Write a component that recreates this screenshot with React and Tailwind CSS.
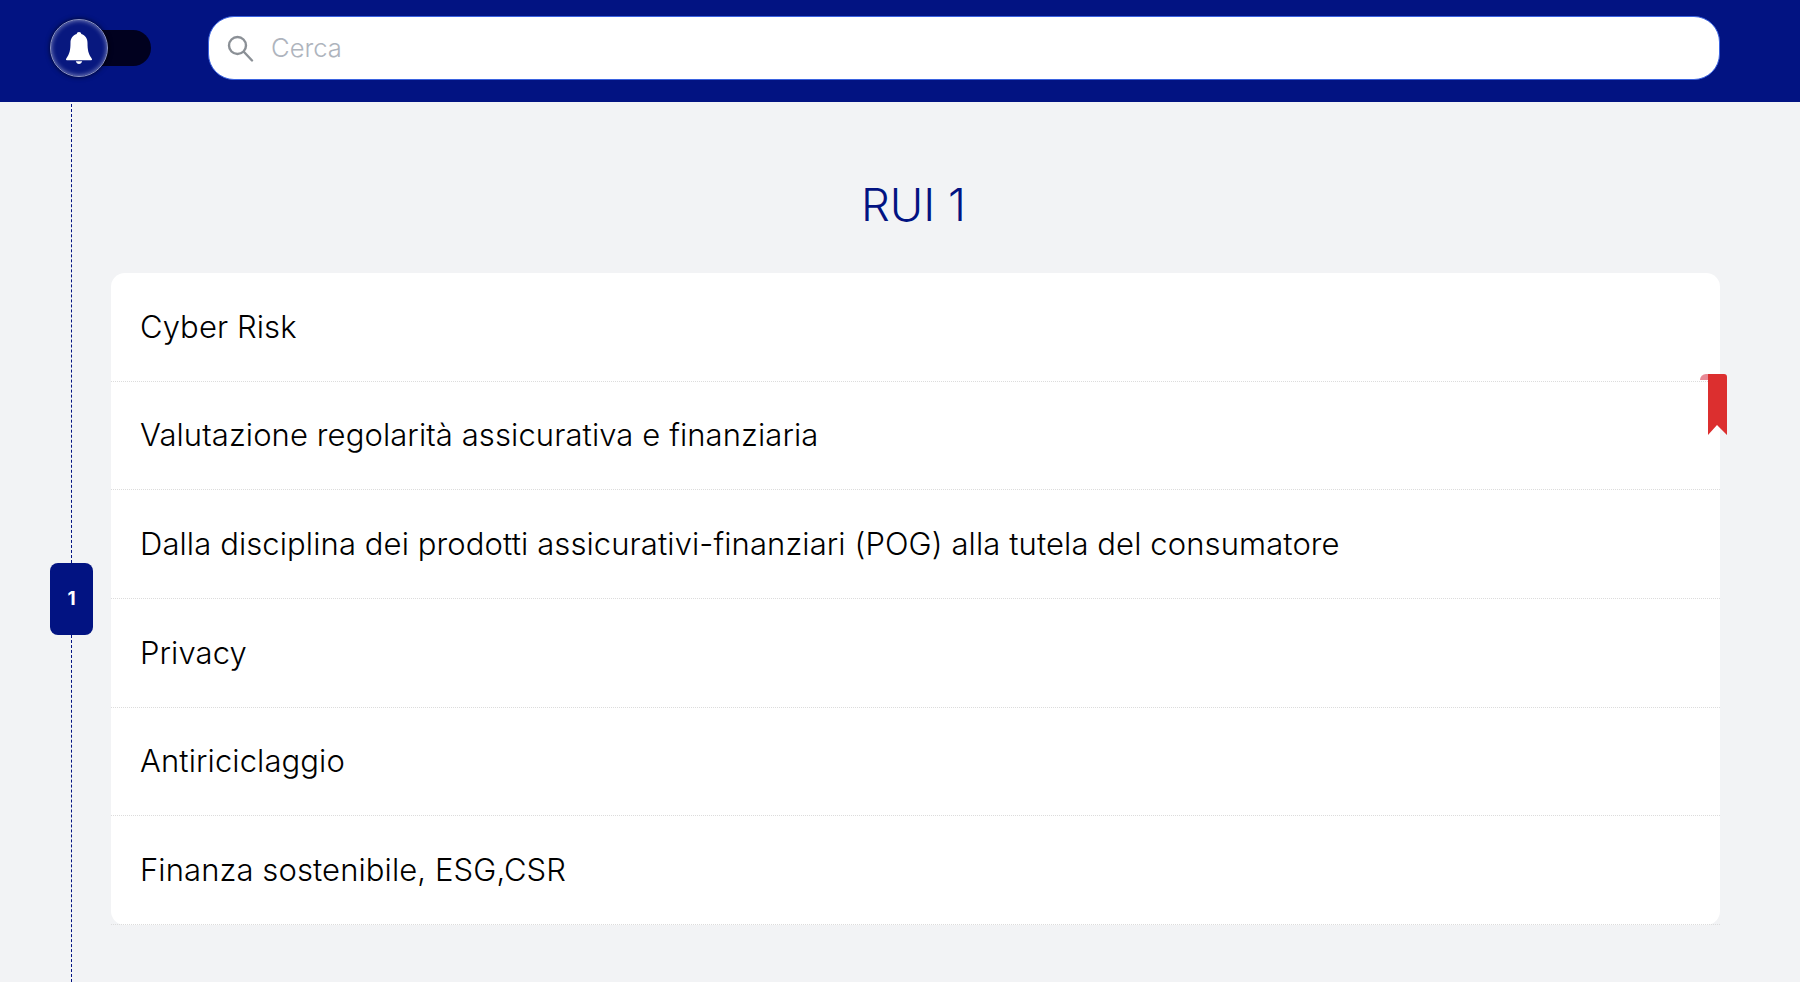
import React from 'react';

const items = [
  'Cyber Risk',
  'Valutazione regolarità assicurativa e finanziaria',
  'Dalla disciplina dei prodotti assicurativi-finanziari (POG) alla tutela del consumatore',
  'Privacy',
  'Antiriciclaggio',
  'Finanza sostenibile, ESG,CSR',
];

function Bell() {
  return (
    <svg viewBox="0 0 26 32" className="w-[26px] h-[32px]" fill="#fff">
      <path d="M13 0c-1.300 0-2.200.9-2.300 2.100C6.700 3.300 4.500 6.600 4.500 11c0 7-1 11-3.900 15-.5.7-.7 1.300-.6 1.800.1.300.4.400.8.400h24.400c.4 0 .7-.1.800-.4.1-.5-.1-1.100-.6-1.800-2.900-4-3.900-8-3.900-15 0-4.400-2.200-7.700-6.200-8.900C15.200.9 14.300 0 13 0z" />
      <path d="M9.800 29.300h6.400c-.4 1.600-1.700 2.700-3.200 2.700s-2.800-1.100-3.200-2.700z" />
    </svg>
  );
}

function SearchIcon() {
  return (
    <svg viewBox="0 0 28 28" className="w-[28px] h-[28px]" fill="none" stroke="#8b9096" strokeWidth="2.400">
      <circle cx="11.500" cy="11.500" r="8.500" />
      <path d="M17.800 17.800L26 26.500" strokeLinecap="round" />
    </svg>
  );
}

export default function App() {
  return (
    <div className="h-[982px] overflow-hidden bg-[#f2f3f5] flex flex-col font-['Inter',sans-serif]">
      <header className="h-[102px] shrink-0 bg-[#021382] flex items-start pt-[16px] pl-[50px] pr-[80px]">
        <div className="relative mt-[3px] w-[102px] h-[58px] shrink-0">
          <div className="absolute left-[40px] top-[11px] w-[61px] h-[36px] rounded-r-full bg-[#01011f]"></div>
          <div className="relative w-[58px] h-[58px] rounded-full bg-[#08187f] border border-[#8f97c4] shadow-[0_0_5px_rgba(0,0,0,0.7),inset_0_0_5px_rgba(255,255,255,0.55)] flex items-center justify-center">
            <Bell />
          </div>
        </div>
        <div className="ml-[56px] flex-1 h-[64px] rounded-[26px] bg-white border border-[#3b63e0] flex items-center pl-[17px]">
          <SearchIcon />
          <span className="ml-[17px] text-[25.600px] font-light text-[#aeb4bd]">Cerca</span>
        </div>
      </header>

      <div className="flex-1 flex min-h-0 pt-[2px]">
        <div className="w-[43px] ml-[50px] shrink-0 flex flex-col items-center">
          <div className="h-[459px] border-l border-dashed border-[#021382]"></div>
          <div className="w-[43px] h-[72px] shrink-0 rounded-[8px] bg-[#021382] text-white text-[19px] font-bold flex items-center justify-center">1</div>
          <div className="flex-1 border-l border-dashed border-[#021382]"></div>
        </div>

        <main className="ml-[18px] mr-[80px] flex-1 flex flex-col">
          <h1 className="mt-[73px] mr-[4px] h-[56px] text-center text-[45.500px] leading-[56px] font-[350] text-[#021382]">RUI 1</h1>
          <div className="relative mt-[40px] bg-white rounded-[14px] divide-y divide-dotted divide-[#dcdcdc]">
            {items.map((item) => (
              <div key={item} className="h-[108.700px] flex items-center pl-[29px] text-[31px] tracking-[0.1px] font-[350] text-black">
                {item}
              </div>
            ))}
            <svg viewBox="0 0 27 62" className="absolute left-[1589px] top-[101px] w-[27px] h-[62px]">
              <path d="M8 0H24a3 3 0 0 1 3 3V61L17 51 8 61Z" fill="#dc2f2f" />
              <path d="M8 0H6a6 6 0 0 0-6 6H8Z" fill="#e88a96" />
            </svg>
          </div>
        </main>
      </div>
    </div>
  );
}
